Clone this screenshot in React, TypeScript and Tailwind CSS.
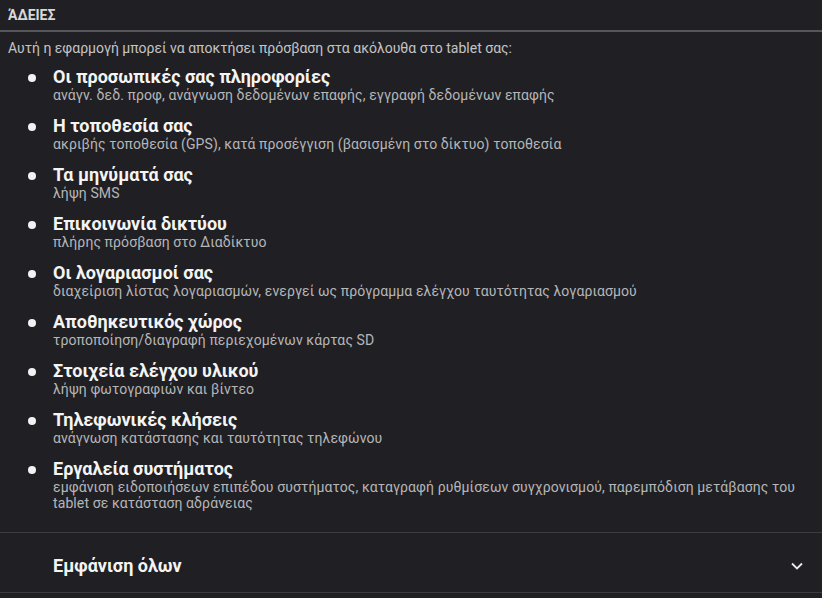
import React from "react";

const permissions = [
  {
    title: "Οι προσωπικές σας πληροφορίες",
    desc: "ανάγν. δεδ. προφ, ανάγνωση δεδομένων επαφής, εγγραφή δεδομένων επαφής",
  },
  {
    title: "Η τοποθεσία σας",
    desc: "ακριβής τοποθεσία (GPS), κατά προσέγγιση (βασισμένη στο δίκτυο) τοποθεσία",
  },
  { title: "Τα μηνύματά σας", desc: "λήψη SMS" },
  { title: "Επικοινωνία δικτύου", desc: "πλήρης πρόσβαση στο Διαδίκτυο" },
  {
    title: "Οι λογαριασμοί σας",
    desc: "διαχείριση λίστας λογαριασμών, ενεργεί ως πρόγραμμα ελέγχου ταυτότητας λογαριασμού",
  },
  {
    title: "Αποθηκευτικός χώρος",
    desc: "τροποποίηση/διαγραφή περιεχομένων κάρτας SD",
  },
  { title: "Στοιχεία ελέγχου υλικού", desc: "λήψη φωτογραφιών και βίντεο" },
  {
    title: "Τηλεφωνικές κλήσεις",
    desc: "ανάγνωση κατάστασης και ταυτότητας τηλεφώνου",
  },
  {
    title: "Εργαλεία συστήματος",
    desc: "εμφάνιση ειδοποιήσεων επιπέδου συστήματος, καταγραφή ρυθμίσεων συγχρονισμού, παρεμπόδιση μετάβασης του tablet σε κατάσταση αδράνειας",
  },
];

export default function App() {
  return (
    <div className="w-[822px] h-[598px] bg-[#202024] font-['Roboto',sans-serif] overflow-hidden">
      <div className="h-[32px] flex items-center px-2 text-[14px] font-bold text-[#d8d8d8] border-b-2 border-[#55555a]">
        ΆΔΕΙΕΣ
      </div>
      <p className="px-2 pt-[7px] text-[14px] leading-[18px] text-[#c4c4c6]">
        Αυτή η εφαρμογή μπορεί να αποκτήσει πρόσβαση στα ακόλουθα στο tablet σας:
      </p>
      <ul className="pt-[10px] pb-[21px]">
        {permissions.map((p) => (
          <li key={p.title} className="flex mb-[13px] last:mb-0">
            <div className="w-[53px] flex justify-end pr-[17px] pt-[7px]">
              <span className="w-[8px] h-[8px] rounded-full bg-[#f2f2f2]" />
            </div>
            <div className="flex-1 pr-6">
              <div className="text-[18px] leading-[20px] font-bold text-[#f4f4f4]">
                {p.title}
              </div>
              <div className="text-[14px] leading-[16px] tracking-[0.1px] text-[#b6b6b8]">
                {p.desc}
              </div>
            </div>
          </li>
        ))}
      </ul>
      <div className="border-t border-[#3c3c40] border-b h-[61px] flex items-center justify-between pl-[53px] pr-[19px] pt-[6px]">
        <span className="text-[18px] font-bold text-[#f4f4f4]">Εμφάνιση όλων</span>
        <svg width="12" height="8" viewBox="0 0 12 8" fill="none">
          <path d="M1 1.5 6 6.5 11 1.5" stroke="#eaeaea" strokeWidth="1.8" />
        </svg>
      </div>
    </div>
  );
}
